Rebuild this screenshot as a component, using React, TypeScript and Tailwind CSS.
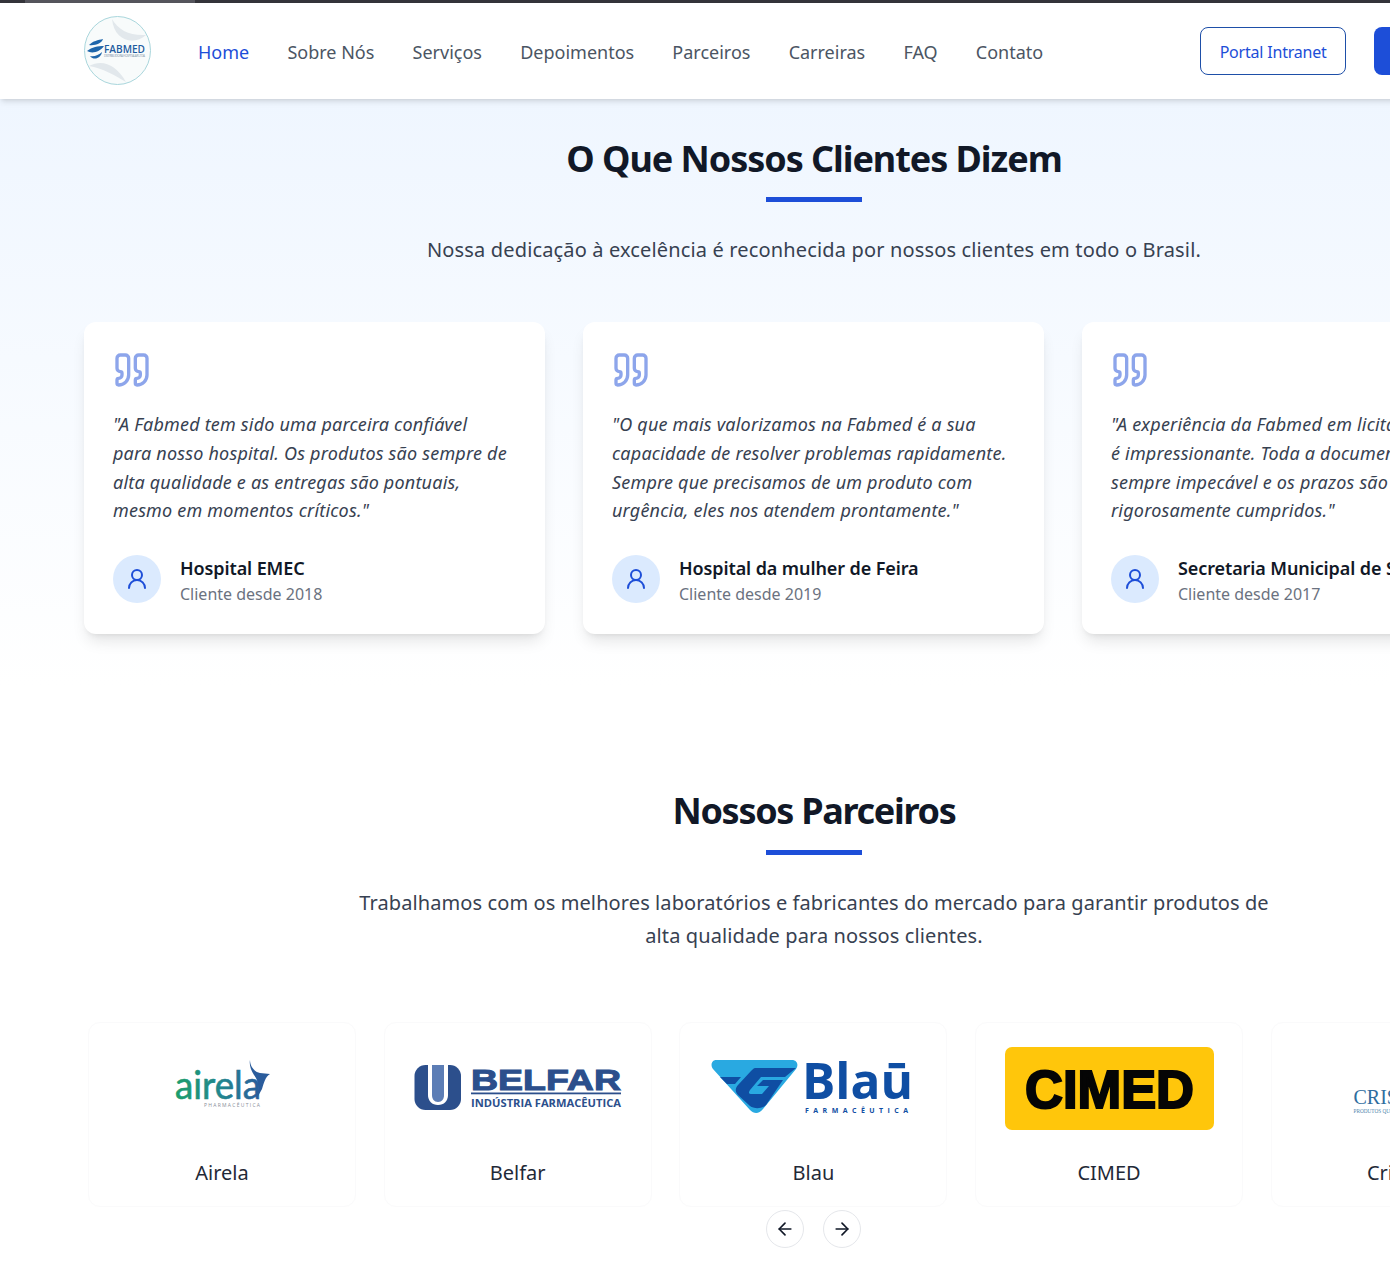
import { ArrowLeft, ArrowRight, Quote, UserRound } from "lucide-react";
import type { ReactNode } from "react";

const navLinks = ["Home", "Sobre Nós", "Serviços", "Depoimentos", "Parceiros", "Carreiras", "FAQ", "Contato"];

const testimonials = [
  {
    quote:
      '"A Fabmed tem sido uma parceira confiável\npara nosso hospital. Os produtos são sempre de\nalta qualidade e as entregas são pontuais,\nmesmo em momentos críticos."',
    name: "Hospital EMEC",
    since: "Cliente desde 2018",
  },
  {
    quote:
      '"O que mais valorizamos na Fabmed é a sua\ncapacidade de resolver problemas rapidamente.\nSempre que precisamos de um produto com\nurgência, eles nos atendem prontamente."',
    name: "Hospital da mulher de Feira",
    since: "Cliente desde 2019",
  },
  {
    quote:
      '"A experiência da Fabmed em licitações\né impressionante. Toda a documentação é\nsempre impecável e os prazos são\nrigorosamente cumpridos."',
    name: "Secretaria Municipal de Saúde",
    since: "Cliente desde 2017",
  },
];

function FabmedLogo() {
  return (
    <svg width="68" height="70" viewBox="0 0 68 70" className="shrink-0">
      <ellipse cx="33.5" cy="34.5" rx="33" ry="34" fill="#f8fbfb" stroke="#a9d6dc" />
      <path d="M28 3C34 14 46 20 62 19C50 30 30 25 28 3Z" fill="#e2e8ec" />
      <path d="M5 50C18 43 32 48 42 66C32 60 18 52 5 50Z" fill="#e2e8ec" />
      <path d="M5 29C9 25 14 24 19 23C18 27 11 30 5 29ZM3 35C8 31 14 30 20 30C16 36 8 38 3 35ZM6 40C10 41 15 39 18 36C17 42 10 45 6 40Z" fill="#1f66ab" />
      <text x="20" y="36.5" fontFamily="'Open Sans', sans-serif" fontSize="11.5" fontWeight="600" fill="#1e5c9f" textLength="41" lengthAdjust="spacingAndGlyphs">
        FABMED
      </text>
      <text x="20" y="41" fontFamily="'Open Sans', sans-serif" fontSize="3" fill="#7d93a8" textLength="41">
        DISTRIBUIDORA HOSPITALAR LTDA
      </text>
    </svg>
  );
}

function AirelaLogo() {
  return (
    <svg width="209" height="83" viewBox="0 0 209 83">
      <defs>
        <linearGradient id="airela" x1="57" x2="143" y1="0" y2="0" gradientUnits="userSpaceOnUse">
          <stop offset="0" stopColor="#1b9e6b" />
          <stop offset="0.55" stopColor="#23858f" />
          <stop offset="1" stopColor="#2a5c9c" />
        </linearGradient>
      </defs>
      <text x="57" y="52" fontFamily="Lato, sans-serif" fontSize="38" fill="url(#airela)" stroke="url(#airela)" strokeWidth="0.6" textLength="86" lengthAdjust="spacingAndGlyphs">
        airela
      </text>
      <path d="M132 13C132 20 137 25 142 26L152 27C147 30 146 36 144 42L139 51C141 42 141 34 136 28C133 23 131 18 132 13Z" fill="#2a5c9c" />
      <text x="86" y="60" fontFamily="'Open Sans', sans-serif" fontSize="5" fill="#8a8f99" textLength="56">
        PHARMACÊUTICA
      </text>
    </svg>
  );
}

function BelfarLogo() {
  return (
    <svg width="209" height="83" viewBox="0 0 209 83">
      <rect x="1.5" y="18" width="46.5" height="45" rx="11" fill="#2c4f8c" />
      <path d="M15 18H35V48C35 54 31 58 25 58C19 58 15 54 15 48Z" fill="#fff" />
      <path d="M19 18H31V48C31 52 29 55 25 55C21 55 19 52 19 48Z" fill="#5c7db5" />
      <text x="58" y="43" fontFamily="'Liberation Sans', sans-serif" fontSize="29" fontWeight="700" fill="#2c4f8c" stroke="#2c4f8c" strokeWidth="1" textLength="150" lengthAdjust="spacingAndGlyphs">
        BELFAR
      </text>
      <rect x="58" y="45.5" width="150" height="1.8" fill="#2c4f8c" />
      <text x="58" y="60" fontFamily="'Open Sans', sans-serif" fontSize="10.5" fontWeight="700" fill="#2c4f8c" textLength="150" lengthAdjust="spacingAndGlyphs">
        INDÚSTRIA FARMACÊUTICA
      </text>
    </svg>
  );
}

function BlauLogo() {
  return (
    <svg width="209" height="83" viewBox="0 0 209 83">
      <path d="M7 13H83C88 13 90 18 87 22L54 62C50 67 45 67 41 63L4 22C1 18 3 13 7 13Z" fill="#29a9e1" />
      <path d="M11 30H32L26 37H18ZM46 21H87L76 30H52L41 43C39 46 40 47 43 47H53L60 39H48L54 33H74L57 58C53 62 45 62 41 59L29 48C26 45 26 41 29 38L42 24C44 22 45 21 46 21Z" fill="#0f4ea3" />
      <text x="93" y="52" fontFamily="'Open Sans', sans-serif" fontSize="50" fontWeight="700" fill="#0f4ea3" textLength="111" lengthAdjust="spacingAndGlyphs">
        Blaū
      </text>
      <text x="96" y="66" fontFamily="'Open Sans', sans-serif" fontSize="7" fontWeight="700" fill="#0f4ea3" textLength="103">
        FARMACÊUTICA
      </text>
    </svg>
  );
}

function CimedLogo() {
  return (
    <svg width="209" height="83" viewBox="0 0 209 83">
      <rect width="209" height="83" rx="7" fill="#ffc60b" />
      <text x="20" y="61" fontFamily="'Liberation Sans', sans-serif" fontSize="54" fontWeight="700" fill="#050505" stroke="#050505" strokeWidth="2.2" textLength="169" lengthAdjust="spacingAndGlyphs">
        CIMED
      </text>
    </svg>
  );
}

function CristaliaLogo() {
  return (
    <svg width="209" height="83" viewBox="0 0 209 83">
      <text x="53.5" y="57" fontFamily="'Liberation Serif', serif" fontSize="20" fill="#2f6d9e">
        CRISTÁLIA
      </text>
      <text x="53.5" y="66" fontFamily="'Liberation Serif', serif" fontSize="7" fill="#4f86ad" textLength="55" lengthAdjust="spacingAndGlyphs">
        PRODUTOS QUÍMICOS
      </text>
    </svg>
  );
}

const partners: { name: string; logo: ReactNode }[] = [
  { name: "Airela", logo: <AirelaLogo /> },
  { name: "Belfar", logo: <BelfarLogo /> },
  { name: "Blau", logo: <BlauLogo /> },
  { name: "CIMED", logo: <CimedLogo /> },
  { name: "Cristália", logo: <CristaliaLogo /> },
];

function SectionTitle({ title, titleClass, ruleClass }: { title: string; titleClass: string; ruleClass: string }) {
  return (
    <div className="flex flex-col items-center">
      <h2 className={`text-[36px] font-bold text-[#111827] ${titleClass}`}>{title}</h2>
      <div className={`h-[5px] w-24 bg-[#1d4ed8] ${ruleClass}`}></div>
    </div>
  );
}

export default function App() {
  return (
    <div className="h-[1273px] w-[1390px] overflow-hidden bg-white font-['Noto_Sans',sans-serif]">
      <div className="w-[1628px]">
        {/* top strip of the browser capture */}
        <div className="flex h-[3px] bg-[#34343a]">
          <div className="ml-[25px] h-full w-[170px] bg-[#55555c]"></div>
        </div>

        <header className="relative z-10 flex h-[96px] items-center bg-white pl-[84px] shadow-md">
          <FabmedLogo />
          <nav className="mt-[2px] ml-[46px] flex gap-[38.2px] text-[18px] text-[#4b5563]">
            {navLinks.map((link) => (
              <a key={link} href="#" className={link === "Home" ? "text-[#1d4ed8]" : ""}>
                {link}
              </a>
            ))}
          </nav>
          <a href="#" className="ml-[157px] flex h-12 w-[146px] items-center justify-center rounded-lg border border-[#1e4fa8] pt-[2px] text-[16px] tracking-[-0.2px] text-[#1d4ed8]">
            Portal Intranet
          </a>
          <a href="#" className="ml-[28px] h-12 w-[160px] rounded-lg bg-[#1d4ed8]"></a>
        </header>

        <section className="h-[587px] bg-gradient-to-b from-[#eff6ff] to-white px-[84px] pt-10">
          <SectionTitle title="O Que Nossos Clientes Dizem" titleClass="leading-[40px] tracking-[-1.05px]" ruleClass="mt-[18px]" />
          <p className="mt-[32px] text-center text-[20px] leading-[32px] tracking-[0.15px] text-[#374151]">
            Nossa dedicação à excelência é reconhecida por nossos clientes em todo o Brasil.
          </p>
          <div className="mt-[56px] grid w-[1459px] grid-cols-3 gap-[38px]">
            {testimonials.map((item) => (
              <div key={item.name} className="h-[312px] rounded-xl bg-white px-[29px] pt-[28px] shadow-lg">
                <Quote size={40} className="-ml-px text-[#1d4ed8] opacity-50" />
                <p className="mt-[20px] h-[115px] text-[18px] leading-[28.8px] tracking-[0.2px] whitespace-pre-line text-[#374151] italic">{item.quote}</p>
                <div className="mt-[27px] flex items-center gap-[19px]">
                  <div className="flex h-12 w-12 items-center justify-center rounded-full bg-[#dbeafe]">
                    <UserRound size={24} className="text-[#1d4ed8]" />
                  </div>
                  <div className="pt-[2px]">
                    <div className="text-[18px] leading-[28px] font-semibold tracking-[-0.1px] whitespace-nowrap text-[#111827]">{item.name}</div>
                    <div className="text-[16px] leading-[24px] text-[#6b7280]">{item.since}</div>
                  </div>
                </div>
              </div>
            ))}
          </div>
        </section>

        <section className="px-[84px] pt-[106px]">
          <SectionTitle title="Nossos Parceiros" titleClass="leading-[38px] tracking-[-1.3px]" ruleClass="mt-[20px]" />
          <p className="mx-auto mt-[31px] max-w-[925px] text-center text-[20px] leading-[33px] tracking-[0.1px] text-[#374151]">
            Trabalhamos com os melhores laboratórios e fabricantes do mercado para garantir produtos de alta qualidade para nossos clientes.
          </p>
          <div className="mt-[70px] ml-[4px] flex gap-[27.7px]">
            {partners.map((partner) => (
              <div key={partner.name} className="flex h-[185px] w-[268px] shrink-0 flex-col items-center rounded-xl border border-[#fafafb] bg-white pt-[24px]">
                {partner.logo}
                <div className="mt-[29px] text-[20px] leading-[28px] text-[#1f2937]">{partner.name}</div>
              </div>
            ))}
          </div>
          <div className="mt-[3px] flex justify-center gap-[19px] pr-px">
            <button className="flex h-[38px] w-[38px] items-center justify-center rounded-full border border-[#e5e7eb] bg-white text-[#111827]">
              <ArrowLeft size={20} />
            </button>
            <button className="flex h-[38px] w-[38px] items-center justify-center rounded-full border border-[#e5e7eb] bg-white text-[#111827]">
              <ArrowRight size={20} />
            </button>
          </div>
        </section>
      </div>
    </div>
  );
}
